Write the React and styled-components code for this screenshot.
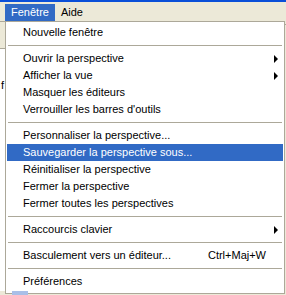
import React from 'react';
import styled, { createGlobalStyle } from 'styled-components';

const GlobalStyle = createGlobalStyle`
  html, body {
    margin: 0;
    padding: 0;
    background: #ece9d8;
  }
  body {
    width: 286px;
    height: 295px;
    overflow: hidden;
    font-family: Tahoma, 'Liberation Sans', Arial, sans-serif;
    font-size: 11px;
    color: #000;
  }
`;

const Frame = styled.div`
  width: 286px;
  height: 295px;
  display: flex;
  flex-direction: column;
  background: #ece9d8;
`;

// bord inférieur de la barre de titre XP
const TitleEdge = styled.div`
  height: 2px;
  background: #0a4fd8;
`;

const MenuBar = styled.div`
  height: 19px;
  display: flex;
  align-items: flex-end;
  padding-left: 5px;
  background: #ece9d8;
`;

const BarItem = styled.div`
  height: 17px;
  line-height: 17px;
  padding: 0 6px;
  background: ${p => (p.$open ? '#316ac5' : 'transparent')};
  color: ${p => (p.$open ? '#fff' : '#000')};
`;

const Workspace = styled.div`
  flex: 1;
  display: flex;
  min-height: 0;
`;

const LeftGutter = styled.div`
  width: 5px;
  display: flex;
  flex-direction: column;
`;

const GutterTab = styled.div`
  height: 26px;
  border-top: 1px solid #aca899;
  border-bottom: 1px solid #aca899;
  background: #ece9d8;
`;

const GutterEditor = styled.div`
  flex: 1;
  background: #fff;
  color: #000;
  padding-top: 30px;
  padding-left: 1px;
  overflow: hidden;
`;

const Popup = styled.div`
  width: 276px;
  height: 268px;
  border: 1px solid #aca899;
  background: #fff;
  padding: 2px 1px 1px 1px;
  display: flex;
  flex-direction: column;
`;

const RightGutter = styled.div`
  flex: 1;
  border-top: 1px solid #aca899;
  margin-top: 3px;
`;

const Item = styled.div`
  height: 17px;
  line-height: 17px;
  display: grid;
  grid-template-columns: 1fr auto 17px;
  align-items: center;
  padding-left: 16px;
  white-space: nowrap;
  background: ${p => (p.$active ? '#316ac5' : 'transparent')};
  color: ${p => (p.$active ? '#fff' : '#000')};
`;

const Shortcut = styled.span`
  text-align: right;
`;

const ArrowCell = styled.span`
  display: flex;
  align-items: center;
  padding-left: 8px;
`;

const Arrow = styled.span`
  width: 0;
  height: 0;
  border-top: 4px solid transparent;
  border-bottom: 4px solid transparent;
  border-left: 4px solid #000;
`;

const Separator = styled.div`
  height: 9px;
  display: flex;
  align-items: center;
  padding: 0 1px;

  &::after {
    content: '';
    flex: 1;
    height: 1px;
    background: #aca899;
  }
`;

const BottomStrip = styled.div`
  height: 4px;
  display: flex;
  padding-left: 12px;
`;

const ToolChip = styled.div`
  width: 16px;
  background: #a9bfe8;
`;

const entries = [
  { label: 'Nouvelle fenêtre' },
  { sep: true },
  { label: 'Ouvrir la perspective', sub: true },
  { label: 'Afficher la vue', sub: true },
  { label: 'Masquer les éditeurs' },
  { label: "Verrouiller les barres d'outils" },
  { sep: true },
  { label: 'Personnaliser la perspective...' },
  { label: 'Sauvegarder la perspective sous...', active: true },
  { label: 'Réinitialiser la perspective' },
  { label: 'Fermer la perspective' },
  { label: 'Fermer toutes les perspectives' },
  { sep: true },
  { label: 'Raccourcis clavier', sub: true },
  { sep: true },
  { label: 'Basculement vers un éditeur...', key: 'Ctrl+Maj+W' },
  { sep: true },
  { label: 'Préférences' },
];

export default function App() {
  return (
    <Frame>
      <GlobalStyle />
      <TitleEdge />
      <MenuBar>
        <BarItem $open>Fenêtre</BarItem>
        <BarItem>Aide</BarItem>
      </MenuBar>
      <Workspace>
        <LeftGutter>
          <GutterTab />
          <GutterEditor>f</GutterEditor>
        </LeftGutter>
        <Popup>
          {entries.map((e, i) =>
            e.sep ? (
              <Separator key={i} />
            ) : (
              <Item key={i} $active={e.active}>
                <span>{e.label}</span>
                <Shortcut>{e.key || ''}</Shortcut>
                <ArrowCell>{e.sub && <Arrow />}</ArrowCell>
              </Item>
            )
          )}
        </Popup>
        <RightGutter />
      </Workspace>
      <BottomStrip>
        <ToolChip />
      </BottomStrip>
    </Frame>
  );
}
